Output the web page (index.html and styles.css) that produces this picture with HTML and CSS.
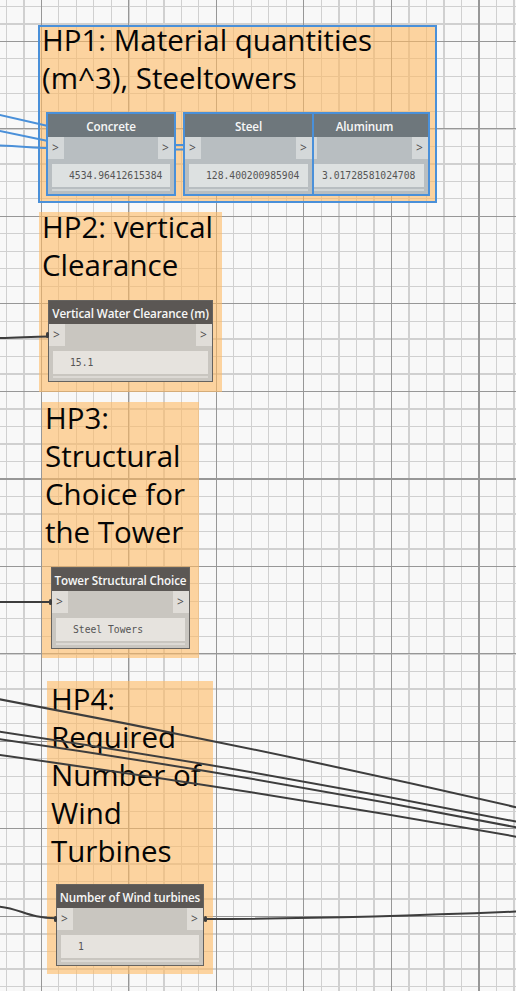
FILE: index.html
```html
<!DOCTYPE html>
<html lang="en">
<head>
    <meta charset="UTF-8">
    <meta name="viewport" content="width=device-width, initial-scale=1.0">
    <title>Wind Farm Graph</title>
    <link rel="stylesheet" href="styles.css">
</head>
<body>
    <div class="canvas">
        <section class="group group-hp1">
            <h2 class="group-title">HP1: Material quantities<br>(m^3), Steeltowers</h2>
        </section>
        <section class="group group-hp2">
            <h2 class="group-title">HP2: vertical<br>Clearance</h2>
        </section>
        <section class="group group-hp3">
            <h2 class="group-title">HP3:<br>Structural<br>Choice for<br>the Tower</h2>
        </section>
        <section class="group group-hp4">
            <h2 class="group-title">HP4:<br>Required<br>Number of<br>Wind<br>Turbines</h2>
        </section>

        <!-- connectors sit above the groups and below the nodes -->
        <svg class="wires" width="516" height="991" viewBox="0 0 516 991">
            <g class="wire-selected">
                <path d="M-2,114.5 L48,126"/>
                <path d="M-2,130.5 L48,141"/>
                <path d="M-2,145.5 C20,146 34,148 48,148"/>
                <path d="M175,145 L185,145"/>
                <path d="M175,149.5 L185,149.5"/>
            </g>
            <g class="wire">
                <path d="M-2,338 C20,337.5 34,336.5 48,336.5"/>
                <path d="M-2,602 L51,602"/>
                <path d="M-2,906.5 C20,908 28,918.3 56,918.3"/>
                <path d="M203,919 C300,919 420,915.5 518,911.5"/>
                <path d="M-2,699 Q258,747.4 518,807.7"/>
                <path d="M-2,731.4 Q258,770 518,822"/>
                <path d="M-2,739 Q258,776.3 518,827.7"/>
                <path d="M-2,754.7 Q258,791 518,837"/>
            </g>
        </svg>

        <div class="node is-selected node-aluminum">
            <div class="node-head">Aluminum</div>
            <div class="node-ports"><span class="port">&gt;</span><span class="port">&gt;</span></div>
            <div class="node-value">3.01728581024708</div>
            <div class="node-foot"></div>
        </div>
        <div class="node is-selected node-steel">
            <div class="node-head">Steel</div>
            <div class="node-ports"><span class="port">&gt;</span><span class="port">&gt;</span></div>
            <div class="node-value">128.400200985904</div>
            <div class="node-foot"></div>
        </div>
        <div class="node is-selected node-concrete">
            <div class="node-head">Concrete</div>
            <div class="node-ports"><span class="port">&gt;</span><span class="port">&gt;</span></div>
            <div class="node-value">4534.96412615384</div>
            <div class="node-foot"></div>
        </div>

        <div class="node node-clearance">
            <div class="node-head">Vertical Water Clearance (m)</div>
            <div class="node-ports"><span class="port linked-in">&gt;</span><span class="port">&gt;</span></div>
            <div class="node-value">15.1</div>
            <div class="node-foot"></div>
        </div>
        <div class="node node-structure">
            <div class="node-head">Tower Structural Choice</div>
            <div class="node-ports"><span class="port linked-in">&gt;</span><span class="port">&gt;</span></div>
            <div class="node-value">Steel Towers</div>
            <div class="node-foot"></div>
        </div>
        <div class="node node-turbines">
            <div class="node-head">Number of Wind turbines</div>
            <div class="node-ports"><span class="port linked-in">&gt;</span><span class="port linked-out">&gt;</span></div>
            <div class="node-value">1</div>
            <div class="node-foot"></div>
        </div>
    </div>
</body>
</html>
```

FILE: styles.css
```css
body {
    margin: 0;
    padding: 0;
    background: #f8f8f8;
    font-family: "Open Sans", "Noto Sans", sans-serif;
}

/* workspace with the minor / major grid, 525px tile = 6 majors = 30 minors */
.canvas {
    position: relative;
    width: 516px;
    height: 991px;
    overflow: hidden;
    background-color: #f8f8f8;
    background-image:
        repeating-linear-gradient(to right, #979797 0 1px, transparent 1px 87.5px),
        repeating-linear-gradient(to bottom, #979797 0 1px, transparent 1px 87.5px),
        repeating-linear-gradient(to right, #d0d0d0 0 1px, transparent 1px 17.5px),
        repeating-linear-gradient(to bottom, #d0d0d0 0 1px, transparent 1px 17.5px);
    background-size: 525px 525px;
    background-position: 41px 41px;
}

/* groups */
.group {
    position: absolute;
    box-sizing: border-box;
    background: rgba(255, 186, 100, 0.6);
    z-index: 1;
}
.group-title {
    margin: -4px 0 0;
    padding-left: 3px;
    font-size: 29.5px;
    line-height: 38px;
    font-weight: 400;
    color: #050505;
}
.group-hp1 {
    left: 38px;
    top: 25px;
    width: 399px;
    height: 178px;
    border: 2px solid #4a90d9;
}
.group-hp1 .group-title {
    margin-top: -6px;
    padding-left: 2px;
}
.group-hp2 {
    left: 39px;
    top: 212px;
    width: 183px;
    height: 180px;
}
.group-hp3 {
    left: 42px;
    top: 402px;
    width: 157px;
    height: 256px;
}
.group-hp3 .group-title {
    margin-top: -3px;
}
.group-hp4 {
    left: 47px;
    top: 681px;
    width: 166px;
    height: 293px;
}
.group-hp4 .group-title {
    margin-top: -1px;
    padding-left: 4px;
}

/* wires */
.wires {
    position: absolute;
    left: 0;
    top: 0;
    z-index: 2;
    fill: none;
}
.wire path {
    stroke: #3d3d3d;
    stroke-width: 2;
}
.wire-selected path {
    stroke: #4a90d9;
    stroke-width: 2;
}

/* nodes */
.node {
    position: absolute;
    z-index: 3;
    box-sizing: border-box;
    display: flex;
    flex-direction: column;
    background: #c9c6c0;
    border: 1px solid #66635f;
}
.node-head {
    height: 23px;
    background: #5b5754;
    color: #f7f7f7;
    font-size: 11.7px;
    font-weight: 600;
    letter-spacing: -0.15px;
    line-height: 24px;
    text-align: center;
    white-space: nowrap;
}
.node-ports {
    height: 22px;
    display: flex;
    justify-content: space-between;
}
.port {
    position: relative;
    width: 16px;
    padding-left: 4px;
    box-sizing: border-box;
    background: #e0ddd8;
    color: #4d4d4d;
    font-size: 12px;
    line-height: 22px;
}
.linked-in::before,
.linked-out::after {
    content: "";
    position: absolute;
    top: 8px;
    width: 3px;
    height: 6px;
    background: #3d3d3d;
    border-radius: 2px;
}
.linked-in::before {
    left: -3px;
}
.linked-out::after {
    right: -4px;
}
.node-value {
    margin: 5px 4px 0;
    height: 23px;
    padding-left: 17px;
    background: #e6e3de;
    color: #555;
    font-family: "DejaVu Sans Mono", "Liberation Mono", monospace;
    font-size: 9.7px;
    line-height: 23px;
    white-space: nowrap;
}
.node-foot {
    margin: 2px 4px 3px;
    height: 2px;
    background: #dcd9d4;
}

.node.is-selected {
    border: 2px solid #4a90d9;
    background: #b8bec1;
}
.is-selected .node-head {
    background: #6e777c;
}
.is-selected .port {
    background: #d4d8d9;
}
.is-selected .node-value {
    background: #dde1e1;
}
.is-selected .node-foot {
    background: #d0d5d6;
}

.node-concrete {
    left: 46px;
    top: 112px;
    width: 130px;
}
.node-steel {
    left: 183px;
    top: 112px;
    width: 131px;
}
.node-aluminum {
    left: 299px;
    top: 112px;
    width: 131px;
}
.node-clearance {
    left: 48px;
    top: 300px;
    width: 165px;
}
.node-structure {
    left: 51px;
    top: 567px;
    width: 139px;
}
.node-turbines {
    left: 56px;
    top: 884px;
    width: 148px;
}
```
